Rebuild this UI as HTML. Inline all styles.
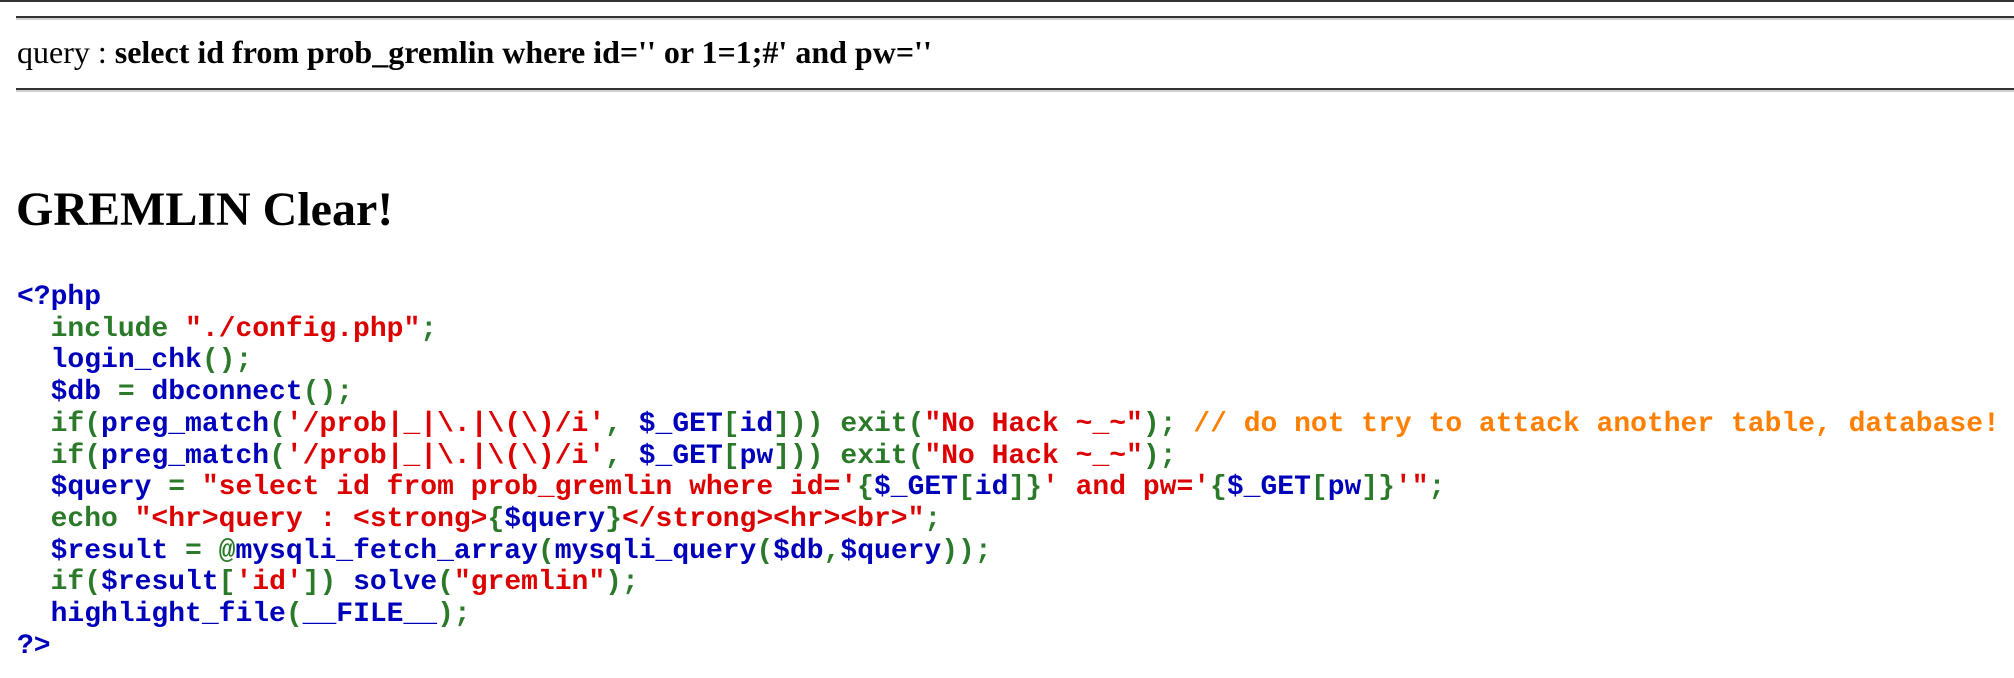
<!DOCTYPE html>
<html><head><meta charset="utf-8">
<style>
html,body{margin:0;padding:0;background:#fff;width:2014px;height:678px;overflow:hidden;position:relative}
.hr{position:absolute;left:16px;right:0;height:2px;background:#333;border-bottom:2px solid #d0d0d0}
.q{position:absolute;left:17px;top:34px;font:32px/36px "Liberation Serif",serif;color:#000;white-space:pre}
h1{position:absolute;left:16px;top:182px;margin:0;font:bold 48px "Liberation Serif",serif;color:#000}
.code{position:absolute;left:17px;top:282px;font:bold 28px/31.7px "Liberation Mono",monospace;white-space:pre;color:#0000BB}
.g{color:#2a7a2a}.b{color:#0000BB}.r{color:#DD0000}.o{color:#FF8000}
</style></head><body>
<div style="position:absolute;left:0;right:0;top:0;height:2px;background:#333"></div>
<div class="hr" style="top:16px"></div>
<div class="q">query : <b>select id from prob_gremlin where id='' or 1=1;#' and pw=''</b></div>
<div class="hr" style="top:88px"></div>
<h1>GREMLIN Clear!</h1>
<div class="code"><span class="b">&lt;?php</span>
  <span class="g">include </span><span class="r">"./config.php"</span><span class="g">;</span>
  <span class="b">login_chk</span><span class="g">();</span>
  <span class="b">$db </span><span class="g">= </span><span class="b">dbconnect</span><span class="g">();</span>
  <span class="g">if(</span><span class="b">preg_match</span><span class="g">(</span><span class="r">'/prob|_|\.|\(\)/i'</span><span class="g">, </span><span class="b">$_GET</span><span class="g">[</span><span class="b">id</span><span class="g">])) exit(</span><span class="r">"No Hack ~_~"</span><span class="g">); </span><span class="o">// do not try to attack another table, database!</span>
  <span class="g">if(</span><span class="b">preg_match</span><span class="g">(</span><span class="r">'/prob|_|\.|\(\)/i'</span><span class="g">, </span><span class="b">$_GET</span><span class="g">[</span><span class="b">pw</span><span class="g">])) exit(</span><span class="r">"No Hack ~_~"</span><span class="g">);</span>
  <span class="b">$query </span><span class="g">= </span><span class="r">"select id from prob_gremlin where id='</span><span class="g">{</span><span class="b">$_GET</span><span class="g">[</span><span class="b">id</span><span class="g">]}</span><span class="r">' and pw='</span><span class="g">{</span><span class="b">$_GET</span><span class="g">[</span><span class="b">pw</span><span class="g">]}</span><span class="r">'"</span><span class="g">;</span>
  <span class="g">echo </span><span class="r">"&lt;hr&gt;query : &lt;strong&gt;</span><span class="g">{</span><span class="b">$query</span><span class="g">}</span><span class="r">&lt;/strong&gt;&lt;hr&gt;&lt;br&gt;"</span><span class="g">;</span>
  <span class="b">$result </span><span class="g">= @</span><span class="b">mysqli_fetch_array</span><span class="g">(</span><span class="b">mysqli_query</span><span class="g">(</span><span class="b">$db</span><span class="g">,</span><span class="b">$query</span><span class="g">));</span>
  <span class="g">if(</span><span class="b">$result</span><span class="g">[</span><span class="r">'id'</span><span class="g">]) </span><span class="b">solve</span><span class="g">(</span><span class="r">"gremlin"</span><span class="g">);</span>
  <span class="b">highlight_file</span><span class="g">(</span><span class="b">__FILE__</span><span class="g">);</span>
<span class="b">?&gt;</span></div>
</body></html>
